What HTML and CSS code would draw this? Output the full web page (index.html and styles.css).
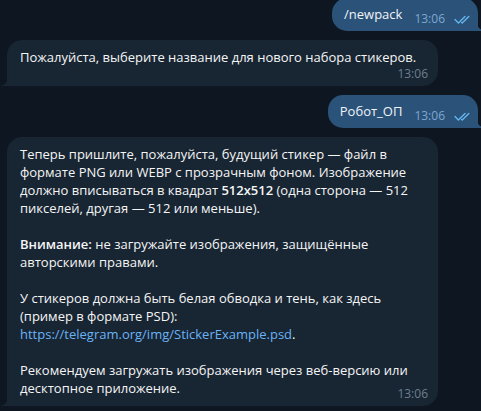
FILE: index.html
```html
<!DOCTYPE html>
<html lang="ru">
    <head>
        <meta charset="UTF-8">
        <meta name="viewport" content="width=device-width, initial-scale=1.0">
        <title>Stickers</title>
        <link rel="stylesheet" href="styles.css">
    </head>
    <body>
        <div class="chat">
            <div class="msg msg-out">
                <div class="bubble">/newpack<span class="meta"><span class="time">13:06</span><svg class="checks" width="17" height="9" viewBox="0 0 17 9"><path d="M1 4.6 L4.4 8 L11 1.4"/><path d="M7.6 7.4 L8.2 8 L14.8 1.4"/></svg></span></div>
            </div>

            <div class="msg msg-in">
                <div class="bubble bubble-wide">Пожалуйста, выберите название для нового набора стикеров.<span class="meta"><span class="time">13:06</span></span></div>
            </div>

            <div class="msg msg-out">
                <div class="bubble">Робот_ОП<span class="meta"><span class="time">13:06</span><svg class="checks" width="17" height="9" viewBox="0 0 17 9"><path d="M1 4.6 L4.4 8 L11 1.4"/><path d="M7.6 7.4 L8.2 8 L14.8 1.4"/></svg></span></div>
            </div>

            <div class="msg msg-in">
                <div class="bubble">Теперь пришлите, пожалуйста, будущий стикер — файл в формате PNG или WEBP с прозрачным фоном. Изображение должно вписываться в квадрат <b>512x512</b> (одна сторона — 512 пикселей, другая — 512 или меньше).<br><br><b>Внимание:</b> не загружайте изображения, защищённые авторскими правами.<br><br>У стикеров должна быть белая обводка и тень, как здесь (пример в формате PSD):<br><a href="#">https://telegram.org/img/StickerExample.psd</a>.<br><br>Рекомендуем загружать изображения через веб-версию или десктопное приложение.<span class="meta"><span class="time">13:06</span></span></div>
            </div>
        </div>
    </body>
</html>
```

FILE: styles.css
```css
* {
    box-sizing: border-box;
}

body {
    margin: 0;
    background-color: #0e1621;
    font-family: "Open Sans", "Noto Sans", sans-serif;
    font-size: 13px;
    line-height: 18px;
    color: #f5f5f5;
    overflow: hidden;
}

.chat {
    display: flex;
    flex-direction: column;
    gap: 9px;
    margin-top: -2px;
}

.msg {
    display: flex;
}

.msg-in {
    justify-content: flex-start;
    padding-left: 7px;
}

.msg-out {
    justify-content: flex-end;
    padding-right: 3px;
}

.bubble {
    position: relative;
    max-width: 431px;
    padding: 8px 10px 8px 13px;
    border-radius: 15px;
}

.msg-in .bubble {
    background-color: #182533;
    border-bottom-left-radius: 0;
}

.msg-out .bubble {
    background-color: #2b5278;
    color: #f0f4f8;
    padding: 7px 7px 8px 12px;
    border-bottom-right-radius: 0;
}

.msg-in .bubble::before {
    content: "";
    position: absolute;
    left: -7px;
    bottom: 0;
    width: 7px;
    height: 8px;
    background: radial-gradient(circle at 0 0, transparent 7.5px, #182533 8px);
}

.msg-out .bubble::before {
    content: "";
    position: absolute;
    right: -7px;
    bottom: 0;
    width: 7px;
    height: 8px;
    background: radial-gradient(circle at 100% 0, transparent 7.5px, #2b5278 8px);
}

.bubble b {
    font-weight: 600;
}

.bubble a {
    color: #6ab3f3;
    text-decoration: none;
}

.meta {
    float: right;
    display: flex;
    align-items: center;
    gap: 9px;
    margin: 7px 0 -4px 12px;
    font-size: 12px;
    line-height: 16px;
    color: #6d7f8f;
}

.bubble-wide .meta {
    margin-top: 0;
}

.msg-out .meta {
    margin-top: 6px;
    color: #7da8d3;
}

.checks {
    fill: none;
    stroke: #64b5ef;
    stroke-width: 1.4;
    stroke-linecap: round;
    stroke-linejoin: round;
}
```
